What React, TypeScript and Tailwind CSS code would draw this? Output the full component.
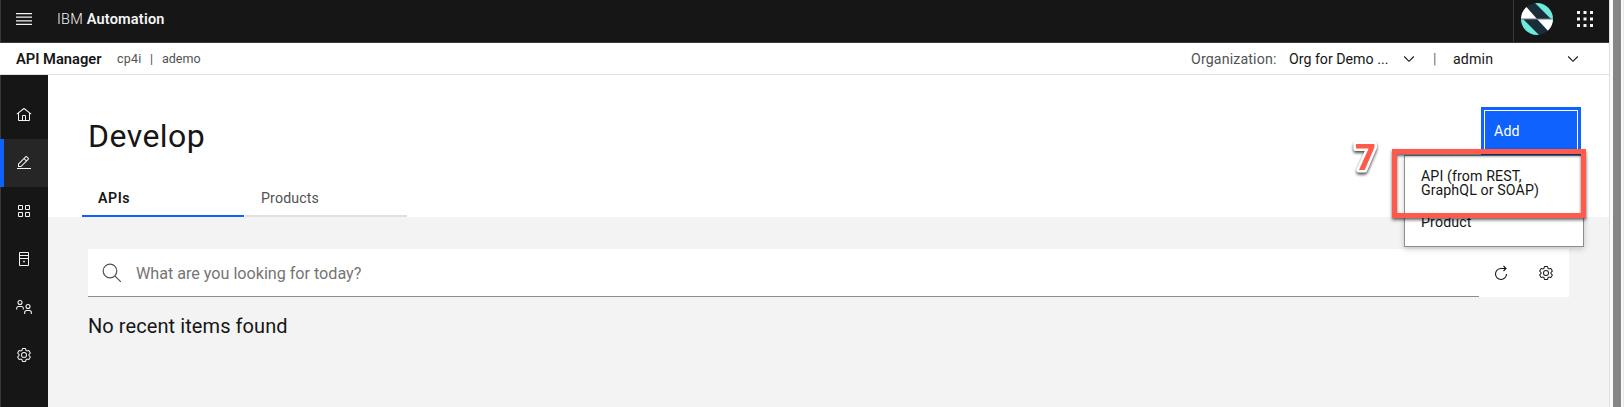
import React from 'react';

const GEAR =
  'M27,16.76c0-.25,0-.5,0-.76s0-.51,0-.77l1.92-1.68A2,2,0,0,0,29.3,11L26.94,7a2,2,0,0,0-1.73-1,2,2,0,0,0-.64.1l-2.43.82a11.35,11.35,0,0,0-1.31-.75l-.51-2.52a2,2,0,0,0-2-1.61H13.64a2,2,0,0,0-2,1.61l-.51,2.52a11.48,11.48,0,0,0-1.32.75L7.43,6.06A2,2,0,0,0,6.79,6,2,2,0,0,0,5.06,7L2.7,11a2,2,0,0,0,.41,2.51L5,15.24c0,.25,0,.5,0,.76s0,.51,0,.77L3.11,18.45A2,2,0,0,0,2.7,21L5.06,25a2,2,0,0,0,1.73,1,2,2,0,0,0,.64-.1l2.43-.82a11.35,11.35,0,0,0,1.31.75l.51,2.52a2,2,0,0,0,2,1.61h4.72a2,2,0,0,0,2-1.61l.51-2.52a11.48,11.48,0,0,0,1.32-.75l2.42.82a2,2,0,0,0,.64.1,2,2,0,0,0,1.73-1L29.3,21a2,2,0,0,0-.41-2.51ZM25.21,24l-3.43-1.16a8.86,8.86,0,0,1-2.71,1.57L18.36,28H13.64l-.71-3.55a9.36,9.36,0,0,1-2.7-1.57L6.79,24,4.43,20l2.72-2.4a8.9,8.9,0,0,1,0-3.13L4.43,12,6.79,8l3.43,1.16a8.86,8.86,0,0,1,2.71-1.57L13.64,4h4.72l.71,3.55a9.36,9.36,0,0,1,2.7,1.57L25.21,8,27.57,12l-2.72,2.4a8.9,8.9,0,0,1,0,3.13L27.57,20ZM16,22a6,6,0,1,1,6-6A5.94,5.94,0,0,1,16,22Zm0-10a3.91,3.91,0,0,0-4,4,3.91,3.91,0,0,0,4,4,3.91,3.91,0,0,0,4-4A3.91,3.91,0,0,0,16,12Z';

const HOME =
  'M16.6123,2.2138a1.01,1.01,0,0,0-1.2427,0L1,13.4194l1.2427,1.5717L4,13.6209V26a2.0041,2.0041,0,0,0,2,2H26a2.0037,2.0037,0,0,0,2-2V13.63L29.7573,15,31,13.4282ZM18,26H14V18h4Zm2,0V18a2.0023,2.0023,0,0,0-2-2H14a2.002,2.002,0,0,0-2,2v8H6V12.0615l10-7.79,10,7.8005V26Z';

const EDIT =
  'M2 26H30V28H2zM25.4 9c.8-.8.8-2 0-2.8l-3.6-3.6c-.8-.8-2-.8-2.8 0l-15 15V24h6.4L25.4 9zM20.4 4L24 7.6l-3 3L17.4 7 20.4 4zM6 22v-3.6l10-10 3.6 3.6-10 10H6z';

function Glyph({ d, className = 'size-4' }: { d: string; className?: string }) {
  return (
    <svg viewBox="0 0 32 32" fill="currentColor" className={className}>
      <path d={d} />
    </svg>
  );
}

function Tiles() {
  return (
    <svg viewBox="0 0 16 16" fill="none" stroke="currentColor" className="size-4">
      <path d="M2.5 2.5h4v4h-4zM9.5 2.5h4v4h-4zM2.5 9.5h4v4h-4zM9.5 9.5h4v4h-4z" />
    </svg>
  );
}

function Catalog() {
  return (
    <svg viewBox="0 0 16 16" fill="none" stroke="currentColor" className="size-4">
      <path d="M3.5 1.5h9v13h-9zM3.5 4.5h9M3.5 7.5h9" />
      <path d="M7.2 10.5h1.6" strokeWidth="1.6" />
    </svg>
  );
}

function People() {
  return (
    <svg viewBox="0 0 16 16" fill="none" stroke="currentColor" strokeWidth="1.1" className="size-4">
      <circle cx="4" cy="3.5" r="2" />
      <path d="M.7 10.5V9A1.8 1.8 0 0 1 2.5 7.5h3A1.8 1.8 0 0 1 7.3 9v1.5" />
      <circle cx="12" cy="7.5" r="2" />
      <path d="M8.7 15v-1.5a1.8 1.8 0 0 1 1.8-2h3a1.8 1.8 0 0 1 1.8 2V15" />
    </svg>
  );
}

function Chevron() {
  return (
    <svg viewBox="0 0 12 8" fill="none" stroke="currentColor" strokeWidth="1.1" className="h-2 w-3">
      <path d="M1.2 1.5 6 6.3l4.8-4.8" />
    </svg>
  );
}

function Avatar() {
  return (
    <svg viewBox="0 0 32 32" className="size-8">
      <defs>
        <clipPath id="disc">
          <circle cx="16" cy="16" r="16" />
        </clipPath>
      </defs>
      <g clipPath="url(#disc)">
        <path d="M0 0h32v32H0z" fill="#1b2d38" />
        <path d="M14 0h18v16h-2z" fill="#6eeadb" />
        <path d="M0 0h2l14 16H0z" fill="#fff" />
        <path d="M16 16h16v14h-3z" fill="#fff" />
        <path d="M0 16h2l16 16H0z" fill="#6eeadb" />
        <path d="M0 16h32" stroke="#6b7a83" strokeWidth="1.2" />
      </g>
    </svg>
  );
}

function NavItem({ active = false, children }: { active?: boolean; children: React.ReactNode }) {
  return (
    <a
      className={
        active
          ? 'flex h-12 items-center justify-center border-l-4 border-[#0f62fe] bg-[#262626] pr-1 text-[#f4f4f4]'
          : 'flex h-12 items-center justify-center border-l border-[#393939] pr-px text-[#f4f4f4]'
      }
    >
      {children}
    </a>
  );
}

export default function App() {
  return (
    <div className="flex h-[407px] w-[1624px] overflow-hidden bg-white font-['Roboto','Liberation_Sans',sans-serif] text-[#161616]">
      <div className="flex w-[1609px] flex-col">
        <header className="flex h-[43px] shrink-0 items-center border-b border-l border-[#393939] bg-[#161616] pl-[15px] text-[#f4f4f4]">
          <svg viewBox="0 0 16 12" fill="currentColor" className="mt-[-4px] h-3 w-4">
            <path d="M0 0h16v1.2H0zM0 3.4h16v1.4H0zM0 7.2h16v1.4H0zM0 10.800h16V12H0z" />
          </svg>
          <div className="mt-[-3px] ml-[25px] text-[14.5px] tracking-[0.014em] whitespace-pre">
            <span className="font-light">IBM </span>
            <span className="font-semibold">Automation</span>
          </div>
          <div className="ml-auto flex h-full border-l border-[#393939] pl-[7px]">
            <div className="mt-[3px]">
              <Avatar />
            </div>
            <svg viewBox="0 0 16 16" fill="currentColor" className="mt-[11px] mr-4 ml-6 size-4">
              <path d="M0 0h3v3H0zM6.5 0h3v3h-3zM13 0h3v3h-3zM0 6.5h3v3H0zM6.5 6.5h3v3h-3zM13 6.5h3v3h-3zM0 13h3v3H0zM6.5 13h3v3h-3zM13 13h3v3h-3z" />
            </svg>
          </div>
        </header>

        <div className="flex h-8 shrink-0 items-center border-b border-[#e0e0e0] pt-0.5 pl-4">
          <span className="w-[101px] text-[14.7px] font-semibold whitespace-nowrap">API Manager</span>
          <span className="w-[33px] text-[12.5px] tracking-[0.015em] text-[#525252]">cp4i</span>
          <span className="w-3 text-[12.5px] text-[#525252]">|</span>
          <span className="text-[12.5px] text-[#525252]">ademo</span>
          <div className="ml-auto flex items-center text-[14.2px] tracking-[0.01em]">
            <span className="w-[98px] text-[#525252]">Organization:</span>
            <span className="w-[114px] tracking-normal">Org for Demo ...</span>
            <Chevron />
            <span className="ml-[18px] w-5 text-[#6f6f6f]">|</span>
            <span className="w-[114px]">admin</span>
            <Chevron />
            <span className="w-[30px]" />
          </div>
        </div>

        <div className="flex min-h-0 flex-1">
          <nav className="w-12 shrink-0 bg-[#161616]">
            <div className="h-4 border-l border-[#393939]" />
            <NavItem>
              <Glyph d={HOME} />
            </NavItem>
            <NavItem active>
              <Glyph d={EDIT} />
            </NavItem>
            <NavItem>
              <Tiles />
            </NavItem>
            <NavItem>
              <Catalog />
            </NavItem>
            <NavItem>
              <People />
            </NavItem>
            <NavItem>
              <Glyph d={GEAR} />
            </NavItem>
            <div className="h-8 border-l border-[#393939]" />
          </nav>

          <main className="flex flex-1 flex-col bg-[#f3f3f3]">
            <section className="flex h-[142px] flex-col bg-white">
              <div className="flex h-[107px] justify-between pr-7 pl-10">
                <h1 className="mt-[41px] text-[32px] leading-[40px] font-normal tracking-[0.014em]">Develop</h1>
                <div className="relative mt-8 h-12 w-[100px]">
                  <button className="h-12 w-[100px] bg-[#0f62fe] p-[3px] text-left text-[14.2px] text-white">
                    <span className="flex h-full items-center border border-white pt-0.5 pl-[9px] tracking-[0.01em]">Add</span>
                  </button>
                  <div className="absolute top-12 right-[-3px] h-[92px] w-[180px] border border-[#8d8d8d] bg-white pt-[13px] pl-4 text-[14.2px] leading-[14px] shadow-[0_2px_6px_rgba(0,0,0,0.2)]">
                    <div className="w-[140px] tracking-[0.008em]">API (from REST, GraphQL or SOAP)</div>
                    <div className="mt-[18px] tracking-[0.01em]">Product</div>
                  </div>
                  <div className="absolute top-[42px] right-[-5px] h-[69px] w-[194px] border-[5px] border-[#ff5a4c] shadow-[0_2px_3px_rgba(0,0,0,0.6),inset_0_2px_3px_rgba(0,0,0,0.6)]" />
                  <svg viewBox="0 0 36 44" className="absolute top-[29px] left-[-132px] h-11 w-9 overflow-visible">
                    <text
                      x="6"
                      y="34"
                      fill="#ff5a4c"
                      stroke="#fff"
                      strokeWidth="5"
                      strokeLinejoin="round"
                      paintOrder="stroke"
                      className="font-['Open_Sans'] text-[36px] font-bold [filter:drop-shadow(0_2px_1.5px_rgba(0,0,0,0.7))]"
                    >
                      7
                    </text>
                  </svg>
                </div>
              </div>
              <div className="flex h-[35px] gap-px pl-[34px] text-[14.2px] tracking-[0.01em]">
                <div className="w-[162px] border-b-2 border-[#0f62fe] pt-1.5 pl-4 font-semibold tracking-[0.04em]">APIs</div>
                <div className="w-[162px] border-b-2 border-[#e0e0e0] pt-1.5 pl-4 text-[#525252]">Products</div>
              </div>
            </section>

            <section className="px-10 pt-8">
              <div className="flex h-12 bg-white">
                <div className="flex w-[1391px] items-center border-b border-[#8d8d8d] pl-[14px]">
                  <svg viewBox="0 0 20 20" fill="none" stroke="#525252" strokeWidth="1.2" className="size-5">
                    <circle cx="8" cy="8" r="6.8" />
                    <path d="m12.8 12.8 6 6" />
                  </svg>
                  <span className="ml-[14px] pt-[3px] text-[16.2px] tracking-[-0.002em] text-[#757575]">
                    What are you looking for today?
                  </span>
                </div>
                <div className="flex items-center pl-[14px]">
                  <svg viewBox="0 0 16 16" fill="none" stroke="#161616" strokeWidth="1.1" className="size-4">
                    <path d="M13 3.5H8a5.5 5.5 0 1 0 5.5 5.5M10.5 1 13 3.5 10.5 6" />
                  </svg>
                  <Glyph d={GEAR} className="ml-[29px] size-4" />
                </div>
              </div>
              <p className="mt-4 text-xl leading-[26px] tracking-[0.004em]">No recent items found</p>
            </section>
          </main>
        </div>
      </div>

      <div className="flex w-[15px] border-l border-[#dedede] bg-[#fafafa] pl-[3px]">
        <div className="w-2 bg-[#868686]" />
        <div className="ml-[2px] w-px bg-[#e8e8e8]" />
      </div>
    </div>
  );
}
